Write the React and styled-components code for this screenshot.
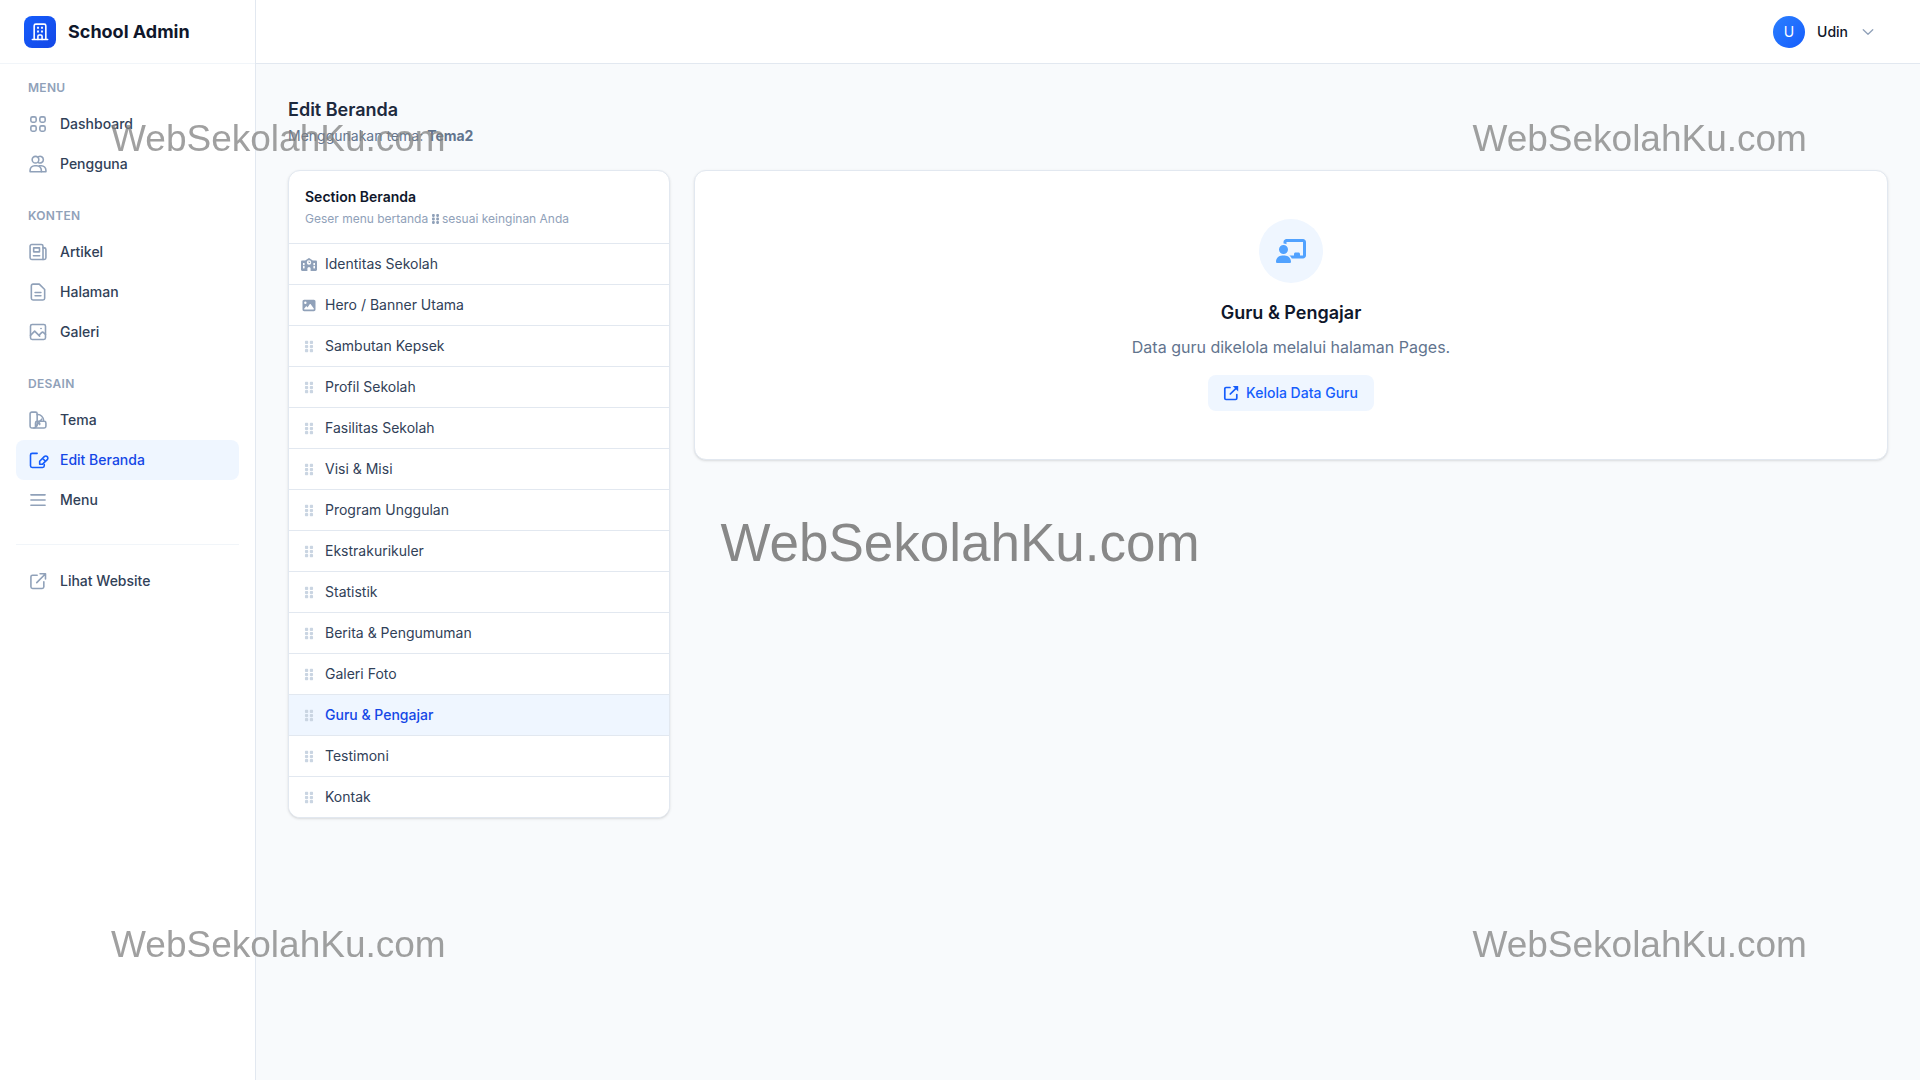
import React from 'react';
import styled, { createGlobalStyle } from 'styled-components';
import { FaSchool, FaImage, FaGripVertical, FaChalkboardUser } from 'react-icons/fa6';

const GlobalStyle = createGlobalStyle`
  *, *::before, *::after { box-sizing: border-box; }
  body {
    margin: 0;
    background: #f8fafc;
    color: #0f172b;
    font-family: Inter, "Liberation Sans", sans-serif;
    font-size: 14px;
    line-height: 20px;
  }
  h1, h2, h3, p, ul { margin: 0; padding: 0; }
  ul { list-style: none; }
  a { color: inherit; text-decoration: none; }
  button { font: inherit; cursor: pointer; }
`;

const icons = {
  building: (
    <>
      <path d="M5 21V4.500a2 2 0 0 1 2-2h10a2 2 0 0 1 2 2V21M2.800 21h18.400" />
      <path d="M9.500 21v-4a1.500 1.500 0 0 1 1.500-1.500h2a1.500 1.500 0 0 1 1.500 1.500v4" />
      <path d="M8.500 7h2.200M13.300 7h2.200M8.500 11.500h2.200M13.300 11.500h2.200" strokeWidth="2.400" strokeLinecap="butt" />
    </>
  ),
  grid: (
    <>
      <rect x="3.400" y="3.400" width="6.400" height="6.400" rx="2" />
      <rect x="14.200" y="3.400" width="6.400" height="6.400" rx="2" />
      <rect x="3.400" y="14.200" width="6.400" height="6.400" rx="2" />
      <rect x="14.200" y="14.200" width="6.400" height="6.400" rx="2" />
    </>
  ),
  users: (
    <>
      <circle cx="9" cy="6.800" r="4" />
      <path d="M12.500 3.300a4 4 0 1 1 0 7" />
      <path d="M2.500 21.200v-1.700a5.500 5.500 0 0 1 5.500-5.500h2.500a5.500 5.500 0 0 1 5.500 5.500v1.700z" />
      <path d="M13.500 14H16a5.500 5.500 0 0 1 5.500 5.500v1.700H16" />
    </>
  ),
  news: (
    <>
      <path d="M18 21H4.500A2 2 0 0 1 2.500 19V5a2 2 0 0 1 2-2H16a2 2 0 0 1 2 2z" />
      <path d="M18 7h1.500a2 2 0 0 1 2 2v10a2 2 0 0 1-2 2H18" />
      <rect x="6.800" y="7" width="7" height="4.800" />
      <path d="M6.500 16.500h7.500" />
    </>
  ),
  file: (
    <>
      <path d="M4 4.500a2 2 0 0 1 2-2h7.500L20 9v10.500a2 2 0 0 1-2 2H6a2 2 0 0 1-2-2z" />
      <path d="M8.500 12.500h7M8.500 16.500h7" />
    </>
  ),
  picture: (
    <>
      <rect x="3" y="3" width="18" height="18" rx="2" />
      <path d="M3 16l5-5 6 6M13 16l3-3c1-1 2-1 3 0l2 2" />
      <path d="M15.500 7.800h.2" strokeWidth="2" />
    </>
  ),
  theme: (
    <>
      <path d="M2.500 4.500a2 2 0 0 1 2-2H9a2 2 0 0 1 2 2V17a4 4 0 0 1-4 4.500H4.500a2 2 0 0 1-2-2z" />
      <path d="M11 5.500c4-.5 8 3 8 8M7 21.500h12.500a2 2 0 0 0 2-2v-4a2 2 0 0 0-2-2H11a2 2 0 0 0-2 2v4" />
      <path d="M9 20l7.500-9M14 13.500v4" />
    </>
  ),
  edit: (
    <>
      <path d="M11 4H5a2 2 0 0 0-2 2v13a2 2 0 0 0 2 2h12.500a2 2 0 0 0 2-2v-1.500" />
      <path d="M14 17v-3.500l5.500-5.500a2.500 2.500 0 0 1 3.600 3.600L17.500 17zM17.500 10l3.500 3.500" />
    </>
  ),
  menu: <path d="M3.500 5.800h17M3.500 12h17M3.500 18.200h17" />,
  external: (
    <>
      <path d="M11 5H5.500a2 2 0 0 0-2 2v12a2 2 0 0 0 2 2H17a2 2 0 0 0 2-2v-6" />
      <path d="M10.500 14L21 3.300M14.500 3.300H21v6.200" />
    </>
  ),
  chevron: <path d="M2.500 7.500l9.500 9 9.500-9" />,
};

function Icon({ name, size = 20 }) {
  return (
    <LineIcon $size={size} viewBox="0 0 24 24" aria-hidden="true">
      {icons[name]}
    </LineIcon>
  );
}

const menu = [
  {
    title: 'MENU',
    items: [
      { icon: 'grid', label: 'Dashboard' },
      { icon: 'users', label: 'Pengguna' },
    ],
  },
  {
    title: 'KONTEN',
    items: [
      { icon: 'news', label: 'Artikel' },
      { icon: 'file', label: 'Halaman' },
      { icon: 'picture', label: 'Galeri' },
    ],
  },
  {
    title: 'DESAIN',
    items: [
      { icon: 'theme', label: 'Tema' },
      { icon: 'edit', label: 'Edit Beranda', active: true },
      { icon: 'menu', label: 'Menu' },
    ],
  },
];

const sections = [
  { label: 'Identitas Sekolah', icon: FaSchool },
  { label: 'Hero / Banner Utama', icon: FaImage },
  { label: 'Sambutan Kepsek' },
  { label: 'Profil Sekolah' },
  { label: 'Fasilitas Sekolah' },
  { label: 'Visi & Misi' },
  { label: 'Program Unggulan' },
  { label: 'Ekstrakurikuler' },
  { label: 'Statistik' },
  { label: 'Berita & Pengumuman' },
  { label: 'Galeri Foto' },
  { label: 'Guru & Pengajar' },
  { label: 'Testimoni' },
  { label: 'Kontak' },
];

export default function App() {
  const [selected, setSelected] = React.useState('Guru & Pengajar');

  return (
    <>
      <GlobalStyle />
      <Layout>
        <Sidebar>
          <Brand>
            <BrandLogo><Icon name="building" /></BrandLogo>
            School Admin
          </Brand>
          <Nav>
            {menu.map((group) => (
              <NavGroup key={group.title}>
                <NavTitle>{group.title}</NavTitle>
                {group.items.map((item) => (
                  <NavLink href="#" key={item.label} $active={item.active}>
                    <Icon name={item.icon} />
                    {item.label}
                  </NavLink>
                ))}
              </NavGroup>
            ))}
            <NavFooter>
              <NavLink href="#"><Icon name="external" />Lihat Website</NavLink>
            </NavFooter>
          </Nav>
        </Sidebar>

        <Content>
          <Topbar>
            <UserButton type="button">
              <Avatar>U</Avatar>
              Udin
              <Icon name="chevron" size={12} />
            </UserButton>
          </Topbar>

          <Main>
            <PageTitle>Edit Beranda</PageTitle>
            <PageInfo>Menggunakan tema: <b>Tema2</b></PageInfo>

            <Columns>
              <Card>
                <CardHead>
                  <CardTitle>Section Beranda</CardTitle>
                  <CardHint>Geser menu bertanda <FaGripVertical /> sesuai keinginan Anda</CardHint>
                </CardHead>
                <ul>
                  {sections.map(({ label, icon: RowIcon = FaGripVertical }) => (
                    <SectionItem key={label}>
                      <SectionButton
                        type="button"
                        $active={label === selected}
                        onClick={() => setSelected(label)}
                      >
                        <SectionIcon $light={RowIcon === FaGripVertical}><RowIcon /></SectionIcon>
                        {label}
                      </SectionButton>
                    </SectionItem>
                  ))}
                </ul>
              </Card>

              <WideCard>
                <Circle><FaChalkboardUser /></Circle>
                <PanelTitle>Guru &amp; Pengajar</PanelTitle>
                <PanelText>Data guru dikelola melalui halaman Pages.</PanelText>
                <PanelLink href="#"><OpenIcon />Kelola Data Guru</PanelLink>
              </WideCard>
            </Columns>
          </Main>
        </Content>
      </Layout>

      <Watermarks aria-hidden="true">
        <Mark $x="14.5%" $y="12.8%">WebSekolahKu.com</Mark>
        <Mark $x="85.4%" $y="12.8%">WebSekolahKu.com</Mark>
        <Mark $x="50%" $y="50.2%" $big>WebSekolahKu.com</Mark>
        <Mark $x="14.5%" $y="87.4%">WebSekolahKu.com</Mark>
        <Mark $x="85.4%" $y="87.4%">WebSekolahKu.com</Mark>
      </Watermarks>
    </>
  );
}

function OpenIcon() {
  return (
    <LineIcon $size={14} viewBox="1 1 14 14" aria-hidden="true">
      <path d="M7 2.500H3a1.200 1.200 0 0 0-1.200 1.200v9.600a1.200 1.200 0 0 0 1.200 1.200h9.600a1.200 1.200 0 0 0 1.200-1.200V9.500" strokeWidth="1.700" />
      <path d="M7.300 9l5.700-5.700" strokeWidth="1.700" />
      <path d="M9.800 1h5.400v5.400z" fill="currentColor" stroke="none" />
    </LineIcon>
  );
}

const LineIcon = styled.svg`
  width: ${(p) => p.$size}px;
  height: ${(p) => p.$size}px;
  flex: none;
  overflow: visible;
  fill: none;
  stroke: currentColor;
  stroke-width: 1.9;
  stroke-linecap: round;
  stroke-linejoin: round;
`;

const Layout = styled.div`
  display: flex;
  min-height: 100vh;
`;

const Sidebar = styled.aside`
  flex: none;
  width: 256px;
  background: #fff;
  border-right: 1px solid #e2e8f0;
`;

const Brand = styled.div`
  height: 64px;
  padding: 0 24px;
  display: flex;
  align-items: center;
  gap: 12px;
  border-bottom: 1px solid #f1f5f9;
  font-size: 18px;
  font-weight: 700;
`;

const BrandLogo = styled.span`
  width: 32px;
  height: 32px;
  display: flex;
  align-items: center;
  justify-content: center;
  border-radius: 8px;
  color: #fff;
  background: linear-gradient(135deg, #155dfc, #1447e6);
`;

const Nav = styled.nav`
  padding: 16px;
`;

const NavGroup = styled.div`
  margin-bottom: 24px;
`;

const NavTitle = styled.p`
  padding: 0 12px;
  margin-bottom: 8px;
  font-size: 12px;
  line-height: 16px;
  font-weight: 600;
  letter-spacing: 0.025em;
  color: #90a1b9;
`;

const NavLink = styled.a`
  display: flex;
  align-items: center;
  gap: 12px;
  padding: 10px 12px;
  border-radius: 8px;
  font-weight: 500;
  color: ${(p) => (p.$active ? '#1447e6' : '#314158')};
  background: ${(p) => (p.$active ? '#eff6ff' : 'transparent')};

  svg {
    color: ${(p) => (p.$active ? '#155dfc' : '#90a1b9')};
  }
`;

const NavFooter = styled.div`
  padding-top: 16px;
  border-top: 1px solid #f1f5f9;
`;

const Content = styled.div`
  flex: 1;
  min-width: 0;
`;

const Topbar = styled.header`
  height: 64px;
  padding: 0 40px;
  display: flex;
  align-items: center;
  justify-content: flex-end;
  background: #fff;
  border-bottom: 1px solid #e2e8f0;
`;

const UserButton = styled.button`
  display: flex;
  align-items: center;
  gap: 12px;
  padding: 0 6px;
  border: none;
  background: none;
  color: #0f172b;
  font-weight: 500;

  svg {
    margin-left: 2px;
    color: #90a1b9;
    stroke-width: 2.6;
  }
`;

const Avatar = styled.span`
  width: 32px;
  height: 32px;
  border-radius: 50%;
  line-height: 32px;
  text-align: center;
  font-weight: 400;
  color: #fff;
  background: linear-gradient(135deg, #2b7fff, #155dfc);
`;

const Main = styled.main`
  padding: 32px;
`;

const PageTitle = styled.h1`
  font-size: 18px;
  line-height: 28px;
  font-weight: 600;
  color: #1d293d;
`;

const PageInfo = styled.p`
  margin-top: 2px;
  color: #62748e;
`;

const Columns = styled.div`
  display: grid;
  grid-template-columns: repeat(4, 1fr);
  gap: 24px;
  align-items: start;
  margin-top: 24px;
`;

const Card = styled.section`
  background: #fff;
  border: 1px solid #e2e8f0;
  border-radius: 12px;
  box-shadow: 0 1px 3px rgba(0, 0, 0, 0.1), 0 1px 2px -1px rgba(0, 0, 0, 0.1);
  overflow: hidden;
`;

const WideCard = styled(Card)`
  grid-column: span 3;
  display: flex;
  flex-direction: column;
  align-items: center;
  padding: 48px;
`;

const CardHead = styled.div`
  padding: 16px;
  border-bottom: 1px solid #e2e8f0;
`;

const CardTitle = styled.h2`
  font-size: 14px;
  line-height: 20px;
  font-weight: 600;
`;

const CardHint = styled.p`
  margin-top: 4px;
  font-size: 12px;
  line-height: 16px;
  color: #90a1b9;

  svg {
    width: 7px;
    height: 12px;
    vertical-align: -2px;
  }
`;

const SectionItem = styled.li`
  & + & {
    border-top: 1px solid #e2e8f0;
  }
`;

const SectionButton = styled.button`
  width: 100%;
  display: flex;
  align-items: center;
  gap: 8px;
  padding: 10px 12px;
  border: none;
  text-align: left;
  color: ${(p) => (p.$active ? '#1447e6' : '#314158')};
  font-weight: ${(p) => (p.$active ? 500 : 400)};
  background: ${(p) => (p.$active ? '#eff6ff' : '#fff')};
`;

const SectionIcon = styled.span`
  display: flex;
  color: ${(p) => (p.$light ? '#cad5e2' : '#90a1b9')};

  svg {
    width: 16px;
    height: 13px;
  }
`;

const Circle = styled.div`
  width: 64px;
  height: 64px;
  display: flex;
  align-items: center;
  justify-content: center;
  border-radius: 50%;
  color: #51a2ff;
  background: #eff6ff;

  svg {
    width: 30px;
    height: 24px;
  }
`;

const PanelTitle = styled.h3`
  margin-top: 16px;
  font-size: 18px;
  line-height: 28px;
  font-weight: 600;
`;

const PanelText = styled.p`
  margin-top: 8px;
  font-size: 16px;
  line-height: 24px;
  color: #62748e;
`;

const PanelLink = styled.a`
  display: flex;
  align-items: center;
  gap: 8px;
  margin-top: 16px;
  padding: 8px 16px;
  border-radius: 8px;
  font-weight: 500;
  color: #155dfc;
  background: #eff6ff;
`;

const Watermarks = styled.div`
  position: fixed;
  inset: 0;
  pointer-events: none;
  font-family: Helvetica, "Liberation Sans", Arial, sans-serif;
`;

const Mark = styled.span`
  position: absolute;
  left: ${(p) => p.$x};
  top: ${(p) => p.$y};
  transform: translate(-50%, -50%);
  white-space: nowrap;
  line-height: 1;
  font-size: ${(p) => (p.$big ? 53 : 37)}px;
  color: ${(p) => (p.$big ? '#888888' : 'rgba(128, 128, 128, 0.75)')};
`;
